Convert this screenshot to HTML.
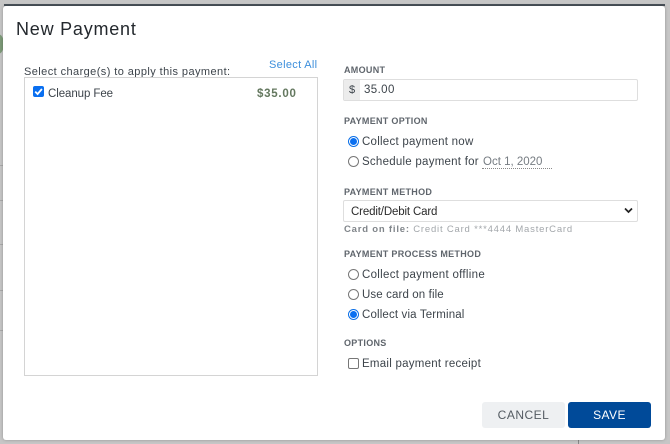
<!DOCTYPE html>
<html><head><meta charset="utf-8">
<style>
html,body{margin:0;padding:0}
body{width:670px;height:444px;overflow:hidden;position:relative;background:#c6c6c6;font-family:"Liberation Sans",sans-serif;color:#3a4148}
.a{position:absolute;white-space:nowrap}
.modal{left:3px;top:6px;width:662px;height:434px;background:#fff;border-radius:3px;box-shadow:0 0 3px rgba(0,0,0,.25)}
.bar{left:4px;top:4px;width:661px;height:2px;background:#4a525a}
.lbl{font-size:9px;font-weight:bold;letter-spacing:.3px;color:#5f656c;line-height:12px;left:344px}
.t{font-size:11.5px;letter-spacing:.25px;line-height:14px;color:#3d444b}
.r{width:11px;height:11px;border:1px solid #777;border-radius:50%;background:#fff;left:348px;box-sizing:border-box}
.r.on{border:1px solid #0a6fe8;background:#fff}
.r.on:after{content:"";position:absolute;left:1px;top:1px;width:7px;height:7px;border-radius:50%;background:#0a6ff0}
.ln{background:#aaa}
</style></head><body>
<div class="a ln" style="left:0;top:165px;width:3px;height:1px"></div>
<div class="a ln" style="left:0;top:200px;width:3px;height:1px"></div>
<div class="a ln" style="left:0;top:244px;width:3px;height:1px"></div>
<div class="a ln" style="left:0;top:290px;width:3px;height:1px"></div>
<div class="a ln" style="left:0;top:330px;width:3px;height:1px"></div>
<div class="a" style="left:-8px;top:34px;width:12px;height:20px;border-radius:50%;background:#7d9a78"></div>
<div class="a" style="left:578px;top:440px;width:1px;height:4px;background:#888"></div>
<div class="a bar"></div>
<div class="a modal"></div>

<div class="a" style="left:16px;top:17px;font-size:18px;letter-spacing:.78px;line-height:24px;color:#23282d">New Payment</div>
<div class="a t" style="left:24px;top:65px;font-size:11px;letter-spacing:.42px">Select charge(s) to apply this payment:</div>
<div class="a" style="left:269px;top:58px;font-size:11px;letter-spacing:.32px;line-height:14px;color:#3d8fdc">Select All</div>
<div class="a" style="left:24px;top:77px;width:294px;height:299px;box-sizing:border-box;border:1px solid #d4d4d4"></div>
<div class="a" style="left:33px;top:86px;width:11px;height:11px;background:#0a6ff0;border-radius:2px"><svg width="11" height="11" style="display:block"><path d="M2.2 5.6 L4.6 8 L8.9 3" fill="none" stroke="#fff" stroke-width="1.8"/></svg></div>
<div class="a t" style="left:48px;top:87px;letter-spacing:-.08px">Cleanup Fee</div>
<div class="a" style="left:257px;top:87px;font-size:11.5px;font-weight:bold;letter-spacing:.75px;line-height:14px;color:#64785f">$35.00</div>

<div class="a lbl" style="top:64px">AMOUNT</div>
<div class="a" style="left:343px;top:79px;width:295px;height:22px;box-sizing:border-box;border:1px solid #dedede;border-radius:2px;background:#fff"></div>
<div class="a" style="left:344px;top:80px;width:16px;height:20px;background:#ececec"></div>
<div class="a t" style="left:349px;top:83px;font-size:11px;letter-spacing:0">$</div>
<div class="a t" style="left:364px;top:83px;letter-spacing:.4px">35.00</div>

<div class="a lbl" style="top:115px">PAYMENT OPTION</div>
<div class="a r on" style="top:135.5px"></div>
<div class="a t" style="left:362px;top:135px">Collect payment now</div>
<div class="a r" style="top:156px"></div>
<div class="a t" style="left:362px;top:155px">Schedule payment for</div>
<div class="a t" style="left:483px;top:155px;color:#767c82;letter-spacing:0">Oct 1, 2020</div>
<div class="a" style="left:482px;top:168px;width:70px;border-top:1px dotted #888"></div>

<div class="a lbl" style="top:186px">PAYMENT METHOD</div>
<div class="a" style="left:343px;top:200px;width:295px;height:22px;box-sizing:border-box;border:1px solid #dedede;border-radius:2px;background:#fff"></div>
<div class="a" style="left:351px;top:205px;font-size:11.5px;line-height:14px;color:#2b2b2b;letter-spacing:-.15px">Credit/Debit Card</div>
<svg class="a" style="left:624px;top:207px" width="9" height="7"><path d="M1 1.5 L4.5 5 L8 1.5" fill="none" stroke="#222" stroke-width="1.7"/></svg>
<div class="a" style="left:344px;top:223px;font-size:9.5px;letter-spacing:.8px;line-height:13px;color:#a3a7ab"><b style="color:#80858a">Card on file:</b> Credit Card ***4444 MasterCard</div>

<div class="a lbl" style="top:248px">PAYMENT PROCESS METHOD</div>
<div class="a r" style="top:269px"></div>
<div class="a t" style="left:362px;top:268px;letter-spacing:.3px">Collect payment offline</div>
<div class="a r" style="top:289px"></div>
<div class="a t" style="left:362px;top:288px;letter-spacing:.12px">Use card on file</div>
<div class="a r on" style="top:308.5px"></div>
<div class="a t" style="left:362px;top:308px;letter-spacing:.15px">Collect via Terminal</div>

<div class="a lbl" style="top:337px">OPTIONS</div>
<div class="a" style="left:348px;top:357.5px;width:11px;height:11px;box-sizing:border-box;border:1px solid #777;border-radius:2px;background:#fff"></div>
<div class="a t" style="left:362px;top:357px">Email payment receipt</div>

<div class="a" style="left:482px;top:402px;width:83px;height:26px;background:#eef0f2;border-radius:3px;color:#545b62;font-size:12px;letter-spacing:.5px;line-height:26px;text-align:center">CANCEL</div>
<div class="a" style="left:568px;top:402px;width:83px;height:26px;background:#004a99;border-radius:3px;color:#fff;font-size:12px;letter-spacing:.4px;line-height:26px;text-align:center">SAVE</div>
</body></html>
